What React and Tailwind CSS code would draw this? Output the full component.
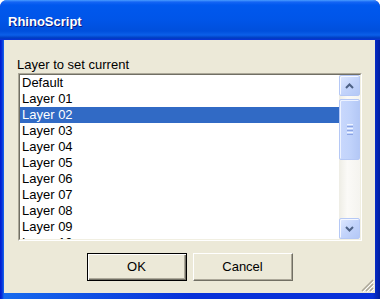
import React from "react";

const layers = [
  "Default",
  "Layer 01",
  "Layer 02",
  "Layer 03",
  "Layer 04",
  "Layer 05",
  "Layer 06",
  "Layer 07",
  "Layer 08",
  "Layer 09",
  "Layer 10",
  "Layer 11",
];

const Chevron = ({ up }) => (
  <svg width="9" height="6" viewBox="0 0 9 6">
    <path
      d={up ? "M1 5 L4.5 1.5 L8 5" : "M1 1 L4.5 4.5 L8 1"}
      fill="none"
      stroke="#4d6185"
      strokeWidth="2"
    />
  </svg>
);

const ScrollButton = ({ up }) => (
  <div className="h-[21px] shrink-0 flex items-center justify-center rounded-[2px] border border-[#b5c8f5] bg-[linear-gradient(135deg,#dfe8fe,#c3d4fb_50%,#b4c8f6)] shadow-[inset_1px_1px_#f4f7ff]">
    <Chevron up={up} />
  </div>
);

const App = () => {
  const [selected, setSelected] = React.useState("Layer 02");

  return (
    <div className="w-[380px] h-[299px] bg-white font-['Liberation_Sans',Arial,sans-serif] text-black">
      <div className="h-full flex flex-col rounded-t-[7px] overflow-hidden bg-[linear-gradient(to_right,#0019cf,#0831d9_2px,#166aee_4px,#0831d9_50%,#0831d9_98%,#001ea0)]">
        {/* title bar */}
        <div className="h-[40px] shrink-0 pl-[8px] pt-[14px] bg-[linear-gradient(to_bottom,#4a9cff_0px,#1565f5_2px,#0058ee_5px,#0055e8_20px,#004fdc_31px,#0b5fe9_35px,#003cc0_38px,#0831d9_40px)]">
          <span className="block text-[13px] leading-[16px] font-bold text-white [text-shadow:1px_1px_#0a1883]">
            RhinoScript
          </span>
        </div>

        {/* dialog body */}
        <div className="relative flex-1 flex flex-col ml-[4px] mr-[5px] mb-[6px] bg-[#ece9d8] pt-[17px]">
          <p className="ml-[13px] text-[13px] leading-[16px]">Layer to set current</p>

          <div className="ml-[14px] w-[344px] h-[168px] border border-t-[#aca899] border-l-[#aca899] border-r-white border-b-white">
            <div className="h-full flex bg-white border border-t-[#716f64] border-l-[#716f64] border-r-[#f1efe2] border-b-[#f1efe2]">
              <div className="flex-1 overflow-hidden">
                {layers.map((name) => (
                  <div
                    key={name}
                    onClick={() => setSelected(name)}
                    className={`h-[16px] pl-[2px] text-[13px] leading-[16px] whitespace-nowrap ${
                      selected === name ? "bg-[#316ac5] text-white" : ""
                    }`}
                  >
                    {name}
                  </div>
                ))}
              </div>

              {/* scrollbar */}
              <div className="w-[21px] shrink-0 flex flex-col bg-[linear-gradient(to_right,#eeede5,#fbfaf7_40%,#f5f4ef)]">
                <ScrollButton up />
                <div className="flex-1">
                  <div className="mt-[3px] h-[61px] flex flex-col items-center justify-center gap-[1px] rounded-[2px] border border-[#b5c8f5] bg-[linear-gradient(to_right,#c9d8fc,#c1d3fb_50%,#b4c8f6)] shadow-[inset_1px_1px_#eef3ff]">
                    <div className="w-[6px] h-[1px] bg-[#eef3ff]" />
                    <div className="w-[6px] h-[1px] bg-[#8ca4e4]" />
                    <div className="w-[6px] h-[1px] bg-[#eef3ff]" />
                    <div className="w-[6px] h-[1px] bg-[#8ca4e4]" />
                    <div className="w-[6px] h-[1px] bg-[#eef3ff]" />
                    <div className="w-[6px] h-[1px] bg-[#8ca4e4]" />
                  </div>
                </div>
                <ScrollButton />
              </div>
            </div>
          </div>

          {/* buttons */}
          <div className="mt-[12px] flex justify-center gap-[6px]">
            <button className="w-[100px] h-[28px] text-[13px] bg-[#ece9d8] border border-black shadow-[inset_1px_1px_#fff,inset_-1px_-1px_#716f64,inset_-2px_-2px_#aca899]">
              OK
            </button>
            <button className="w-[100px] h-[28px] text-[13px] bg-[#ece9d8] border border-t-white border-l-white border-r-[#716f64] border-b-[#716f64] shadow-[inset_-1px_-1px_#aca899]">
              Cancel
            </button>
          </div>

          {/* resize grip */}
          <svg className="absolute right-[1px] bottom-[1px]" width="13" height="13" viewBox="0 0 13 13">
            <path d="M12 1 L1 12 M12 5 L5 12 M12 9 L9 12" stroke="#aca899" strokeWidth="1.5" />
            <path d="M13 2 L2 13 M13 6 L6 13 M13 10 L10 13" stroke="#ffffff" strokeWidth="1" />
          </svg>
        </div>
      </div>
    </div>
  );
};

export default App;
